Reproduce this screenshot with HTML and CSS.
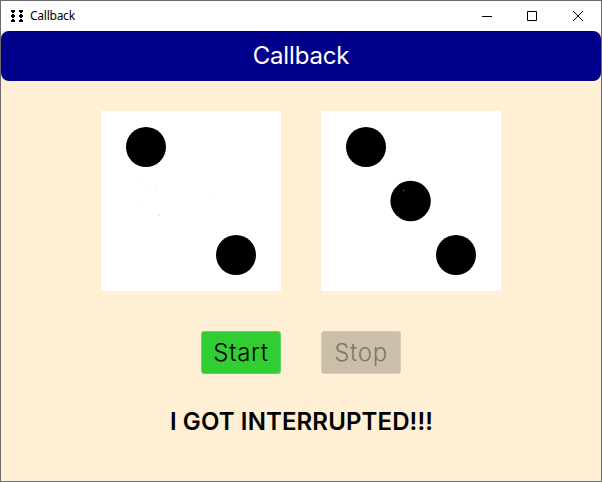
FILE: index.html
```html
<!DOCTYPE html>
<html lang="en">
<head>
<meta charset="utf-8">
<title>Callback</title>
<link rel="stylesheet" href="styles.css">
</head>
<body>
<div class="window">
  <header class="titlebar">
    <svg class="app-icon" width="14" height="12" viewBox="0 0 14 12" shape-rendering="crispEdges" aria-hidden="true">
      <path d="M1 0h4v1H1zM1 1h4v1H1zM2 2h2v1H2zM2 4h2v1H2zM1 5h4v2H1zM2 7h2v1H2zM2 9h2v1H2zM1 10h4v2H1zM9 0h4v2H9zM10 2h2v1h-2zM10 4h2v1h-2zM9 5h4v2H9zM10 7h2v1h-2zM10 9h2v1h-2zM9 10h4v2H9z"/>
    </svg>
    <span class="title">Callback</span>
    <nav class="controls">
      <button aria-label="Minimize"><svg width="10" height="10" viewBox="0 0 10 10"><path d="M0 5.5h10"/></svg></button>
      <button aria-label="Maximize"><svg width="10" height="10" viewBox="0 0 10 10"><path d="M.5 .5h9v9h-9z"/></svg></button>
      <button aria-label="Close"><svg width="10" height="10" viewBox="0 0 10 10"><path d="M0 0l10 10M10 0L0 10"/></svg></button>
    </nav>
  </header>
  <main class="content">
    <h1 class="banner">Callback</h1>
    <div class="dice">
      <svg width="180" height="180" viewBox="0 0 180 180">
        <rect width="180" height="180" fill="#fff"/>
        <circle cx="45" cy="36" r="20"/>
        <circle cx="135" cy="144" r="20"/>
        <g fill="#d8d8d8"><path d="M37 72h1v1h-1zM54 74h1v1h-1zM36 90h1v1h-1zM108 83h1v1h-1z"/></g>
        <path fill="#ececec" d="M57 103h2v2h-2zM50 78h1v1h-1z"/>
      </svg>
      <svg width="180" height="180" viewBox="0 0 180 180">
        <rect width="180" height="180" fill="#fff"/>
        <circle cx="45" cy="36" r="20"/>
        <circle cx="89.6" cy="90" r="20.2"/>
        <circle cx="135" cy="144" r="20"/>
        <path fill="#888" d="M82 79h1v1h-1z"/>
      </svg>
    </div>
    <div class="actions">
      <button class="action start">Start</button>
      <button class="action stop" disabled>Stop</button>
    </div>
    <p class="message">I GOT INTERRUPTED!!!</p>
  </main>
</div>
</body>
</html>
```
FILE: styles.css
```css
* { box-sizing: border-box; }
body { margin: 0; }
.window {
  display: flex;
  flex-direction: column;
  width: 602px;
  height: 482px;
  border: 1px solid #6b6a6c;
  background: papayawhip;
  font-family: Inter, "Liberation Sans", sans-serif;
}
.titlebar {
  display: flex;
  align-items: center;
  height: 30px;
  padding-left: 9px;
  background: #fff;
}
.app-icon { display: block; margin-right: 6px; }
.title { font: 12px/16px "Noto Sans", sans-serif; letter-spacing: -.25px; }
.controls { display: flex; margin-left: auto; }
.controls button {
  display: flex;
  align-items: center;
  justify-content: center;
  width: 46px;
  height: 30px;
  padding: 0;
  border: 0;
  background: none;
}
.controls button:first-child { width: 44px; }
.controls svg { display: block; fill: none; stroke: #000; }
.content { display: flex; flex-direction: column; align-items: center; }
.banner {
  width: 100%;
  height: 50px;
  margin: 0;
  border-radius: 8px;
  background: darkblue;
  color: #fff;
  font-size: 24px;
  font-weight: 400;
  line-height: 50px;
  letter-spacing: -.15px;
  text-align: center;
}
.dice { display: flex; gap: 40px; margin-top: 30px; }
.dice svg { display: block; }
.actions { display: flex; gap: 40px; margin-top: 40px; }
.action {
  width: 80px;
  height: 43px;
  padding: 0;
  border: 1px solid;
  border-radius: 3px;
  font: 320 24px/39px Inter, "Liberation Sans", sans-serif;
  letter-spacing: .7px;
  color: #000;
}
.start { background: limegreen; border-color: #65d35c; }
.stop { background: #ccbfaa; border-color: #d8cbb5; color: #7f776a; }
.message {
  margin: 33px 0 0;
  padding-left: 1px;
  font-size: 24px;
  font-weight: 600;
  line-height: 30px;
  letter-spacing: .12px;
}
```
